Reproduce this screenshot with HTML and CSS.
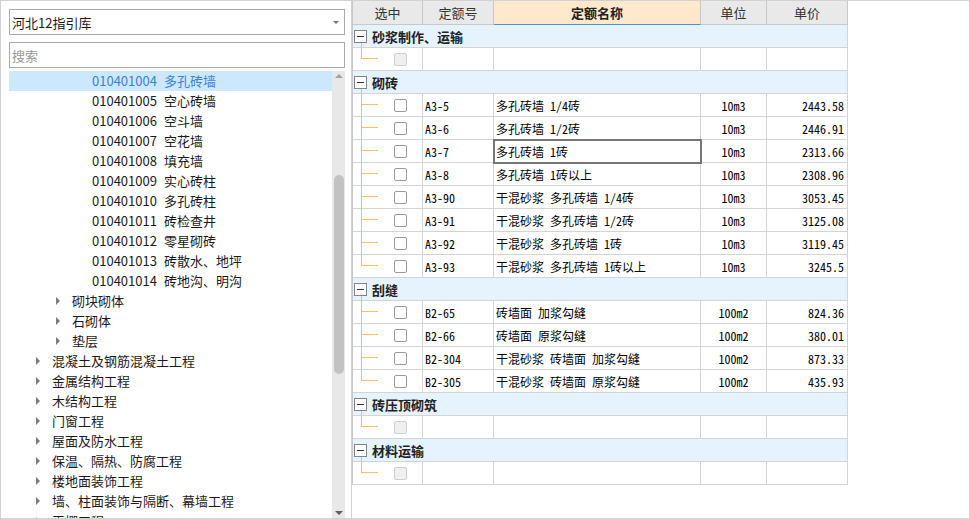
FILE: index.html
```html
<!DOCTYPE html>
<html lang="zh">
<head>
<meta charset="utf-8">
<title>定额</title>
<link rel="stylesheet" href="styles.css">
</head>
<body>
<div class="frame">
  <aside class="side">
    <div class="select"><span>河北12指引库</span><span class="drop"></span></div>
    <div class="search"><span class="ph">搜索</span></div>
    <div class="tree">
      <div class="list">
        <div class="node l4 sel"><span class="caret none"></span><span class="code">010401004</span><span>多孔砖墙</span></div>
        <div class="node l4"><span class="caret none"></span><span class="code">010401005</span><span>空心砖墙</span></div>
        <div class="node l4"><span class="caret none"></span><span class="code">010401006</span><span>空斗墙</span></div>
        <div class="node l4"><span class="caret none"></span><span class="code">010401007</span><span>空花墙</span></div>
        <div class="node l4"><span class="caret none"></span><span class="code">010401008</span><span>填充墙</span></div>
        <div class="node l4"><span class="caret none"></span><span class="code">010401009</span><span>实心砖柱</span></div>
        <div class="node l4"><span class="caret none"></span><span class="code">010401010</span><span>多孔砖柱</span></div>
        <div class="node l4"><span class="caret none"></span><span class="code">010401011</span><span>砖检查井</span></div>
        <div class="node l4"><span class="caret none"></span><span class="code">010401012</span><span>零星砌砖</span></div>
        <div class="node l4"><span class="caret none"></span><span class="code">010401013</span><span>砖散水、地坪</span></div>
        <div class="node l4"><span class="caret none"></span><span class="code">010401014</span><span>砖地沟、明沟</span></div>
        <div class="node l3"><span class="caret"></span><span>砌块砌体</span></div>
        <div class="node l3"><span class="caret"></span><span>石砌体</span></div>
        <div class="node l3"><span class="caret"></span><span>垫层</span></div>
        <div class="node l2"><span class="caret"></span><span>混凝土及钢筋混凝土工程</span></div>
        <div class="node l2"><span class="caret"></span><span>金属结构工程</span></div>
        <div class="node l2"><span class="caret"></span><span>木结构工程</span></div>
        <div class="node l2"><span class="caret"></span><span>门窗工程</span></div>
        <div class="node l2"><span class="caret"></span><span>屋面及防水工程</span></div>
        <div class="node l2"><span class="caret"></span><span>保温、隔热、防腐工程</span></div>
        <div class="node l2"><span class="caret"></span><span>楼地面装饰工程</span></div>
        <div class="node l2"><span class="caret"></span><span>墙、柱面装饰与隔断、幕墙工程</span></div>
        <div class="node l2"><span class="caret"></span><span>天棚工程</span></div>
      </div>
      <div class="sb">
        <span class="up"></span>
        <span class="thumb"></span>
        <span class="down"></span>
      </div>
    </div>
  </aside>
  <main class="main">
    <div class="grid">
      <div class="c h">选中</div>
      <div class="c h">定额号</div>
      <div class="c h hot">定额名称</div>
      <div class="c h">单位</div>
      <div class="c h">单价</div>

      <div class="c g"><span class="gbox"><span class="box"><span class="minus"></span></span><span class="stem"></span></span><span class="gl">砂浆制作、运输</span></div>
      <div class="c tc"><span class="br last"></span><span class="chk off"></span></div><div class="c"></div><div class="c"></div><div class="c"></div><div class="c"></div>

      <div class="c g"><span class="gbox"><span class="box"><span class="minus"></span></span><span class="stem"></span></span><span class="gl">砌砖</span></div>
      <div class="c tc"><span class="br"></span><span class="chk"></span></div><div class="c code2">A3-5</div><div class="c nm">多孔砖墙 1/4砖</div><div class="c un">10m3</div><div class="c pr">2443.58</div>
      <div class="c tc"><span class="br"></span><span class="chk"></span></div><div class="c code2">A3-6</div><div class="c nm">多孔砖墙 1/2砖</div><div class="c un">10m3</div><div class="c pr">2446.91</div>
      <div class="c tc"><span class="br"></span><span class="chk"></span></div><div class="c code2">A3-7</div><div class="c nm cur">多孔砖墙 1砖</div><div class="c un">10m3</div><div class="c pr">2313.66</div>
      <div class="c tc"><span class="br"></span><span class="chk"></span></div><div class="c code2">A3-8</div><div class="c nm">多孔砖墙 1砖以上</div><div class="c un">10m3</div><div class="c pr">2308.96</div>
      <div class="c tc"><span class="br"></span><span class="chk"></span></div><div class="c code2">A3-90</div><div class="c nm">干混砂浆 多孔砖墙 1/4砖</div><div class="c un">10m3</div><div class="c pr">3053.45</div>
      <div class="c tc"><span class="br"></span><span class="chk"></span></div><div class="c code2">A3-91</div><div class="c nm">干混砂浆 多孔砖墙 1/2砖</div><div class="c un">10m3</div><div class="c pr">3125.08</div>
      <div class="c tc"><span class="br"></span><span class="chk"></span></div><div class="c code2">A3-92</div><div class="c nm">干混砂浆 多孔砖墙 1砖</div><div class="c un">10m3</div><div class="c pr">3119.45</div>
      <div class="c tc"><span class="br last"></span><span class="chk"></span></div><div class="c code2">A3-93</div><div class="c nm">干混砂浆 多孔砖墙 1砖以上</div><div class="c un">10m3</div><div class="c pr">3245.5</div>

      <div class="c g"><span class="gbox"><span class="box"><span class="minus"></span></span><span class="stem"></span></span><span class="gl">刮缝</span></div>
      <div class="c tc"><span class="br"></span><span class="chk"></span></div><div class="c code2">B2-65</div><div class="c nm">砖墙面 加浆勾缝</div><div class="c un">100m2</div><div class="c pr">824.36</div>
      <div class="c tc"><span class="br"></span><span class="chk"></span></div><div class="c code2">B2-66</div><div class="c nm">砖墙面 原浆勾缝</div><div class="c un">100m2</div><div class="c pr">380.01</div>
      <div class="c tc"><span class="br"></span><span class="chk"></span></div><div class="c code2">B2-304</div><div class="c nm">干混砂浆 砖墙面 加浆勾缝</div><div class="c un">100m2</div><div class="c pr">873.33</div>
      <div class="c tc"><span class="br last"></span><span class="chk"></span></div><div class="c code2">B2-305</div><div class="c nm">干混砂浆 砖墙面 原浆勾缝</div><div class="c un">100m2</div><div class="c pr">435.93</div>

      <div class="c g"><span class="gbox"><span class="box"><span class="minus"></span></span><span class="stem"></span></span><span class="gl">砖压顶砌筑</span></div>
      <div class="c tc"><span class="br last"></span><span class="chk off"></span></div><div class="c"></div><div class="c"></div><div class="c"></div><div class="c"></div>

      <div class="c g"><span class="gbox"><span class="box"><span class="minus"></span></span><span class="stem"></span></span><span class="gl">材料运输</span></div>
      <div class="c tc"><span class="br last"></span><span class="chk off"></span></div><div class="c"></div><div class="c"></div><div class="c"></div><div class="c"></div>
    </div>
  </main>
</div>
</body>
</html>
```
FILE: styles.css
```css
* { box-sizing: border-box; }
html, body { margin: 0; padding: 0; background: #fff; }
body {
  font-family: "Noto Sans CJK SC", "Microsoft YaHei", sans-serif;
  font-size: 13px;
  color: #1e1e1e;
}
.frame {
  width: 970px;
  height: 519px;
  border: 1px solid #d2d2d2;
  display: flex;
  overflow: hidden;
}

/* ---------- left side ---------- */
.side {
  width: 351px;
  flex: none;
  border-right: 1px solid #d2d2d2;
  padding: 8px 6px 0 8px;
  display: flex;
  flex-direction: column;
}
.select, .search {
  height: 26px;
  flex: none;
  border: 1px solid #ababab;
  display: flex;
  align-items: center;
  padding: 0 5px 0 2px;
  line-height: 1;
}
.select { justify-content: space-between; color: #1a1a1a; }
.drop {
  width: 0; height: 0;
  border-left: 3px solid transparent;
  border-right: 3px solid transparent;
  border-top: 3px solid #777;
}
.search { margin-top: 7px; }
.ph { color: #9a9a9a; }
.tree {
  margin-top: 3px;
  flex: 1;
  min-height: 0;
  display: flex;
}
.list {
  flex: 1;
  overflow: hidden;
}
.node {
  height: 20px;
  line-height: 20px;
  display: flex;
  align-items: center;
  white-space: nowrap;
  color: #1a1a1a;
}
.node.l2 { padding-left: 27px; }
.node.l3 { padding-left: 47px; }
.node.l4 { padding-left: 67px; }
.node.sel { background: #cce8ff; color: #3c7fd6; }
.caret {
  flex: none;
  width: 0; height: 0;
  border-left: 4px solid #7c7c7c;
  border-top: 4px solid transparent;
  border-bottom: 4px solid transparent;
  margin-right: 12px;
}
.caret.none { visibility: hidden; }
.code { margin-right: 7px; }

.sb {
  width: 13px;
  flex: none;
  background: #e8e8e8;
  display: flex;
  flex-direction: column;
  align-items: center;
}
.up {
  margin-top: 3px;
  width: 0; height: 0;
  border-left: 4px solid transparent;
  border-right: 4px solid transparent;
  border-bottom: 4px solid #a3a3a3;
}
.thumb {
  margin-top: 97px;
  width: 10px;
  height: 199px;
  border-radius: 5px;
  background: #c2c2c2;
}
.down {
  margin-top: auto;
  margin-bottom: 3px;
  width: 0; height: 0;
  border-left: 4px solid transparent;
  border-right: 4px solid transparent;
  border-top: 4px solid #5e5e5e;
}

/* ---------- right grid ---------- */
.main { flex: 1; min-width: 0; }
.grid {
  display: grid;
  grid-template-columns: 70px 71px 207px 66px 81px;
  grid-template-rows: 24px;
  grid-auto-rows: 23px;
  border-left: 1px solid #c8c8c8;
  width: 496px;
  font-family: "Noto Sans Mono CJK SC", "Noto Sans CJK SC", monospace;
  font-size: 12px;
  color: #000;
}
.c {
  border-right: 1px solid #d4d4d4;
  border-bottom: 1px solid #d4d4d4;
  display: flex;
  align-items: center;
  white-space: nowrap;
  overflow: hidden;
  background: #fff;
}
.h {
  background: #e9e9e9;
  border-color: #c8c8c8;
  justify-content: center;
  font-family: "Noto Sans CJK SC", sans-serif;
  font-size: 13px;
  color: #333;
}
.h.hot {
  background: #ffe8cc;
  border-bottom-color: #4d94e0;
  font-weight: bold;
  color: #222;
}
.g {
  grid-column: 1 / -1;
  background: #e5f3fe;
  padding-left: 1px;
  align-items: stretch;
  overflow: visible;
}
.gbox {
  flex: none;
  width: 13px;
  display: flex;
  flex-direction: column;
  align-items: center;
  padding-top: 5px;
  margin-bottom: -1px;
}
.box {
  width: 13px;
  height: 13px;
  border: 1px solid #848484;
  background: #fff;
  display: flex;
  align-items: center;
  justify-content: center;
  flex: none;
}
.minus { width: 7px; height: 1px; background: #333; }
.stem {
  flex: 1;
  width: 1px;
  margin-left: 1px;
  background: #fbbf5a;
}
.gl {
  align-self: center;
  margin-left: 5px;
  font-family: "Noto Sans CJK SC", sans-serif;
  font-size: 13px;
  font-weight: bold;
  color: #222;
}
.tc {
  overflow: visible;
  align-items: stretch;
  padding-left: 8px;
}
.br {
  flex: none;
  width: 17px;
  margin-bottom: -1px;
  border-left: 1px solid #fbbf5a;
  background: linear-gradient(#fbbf5a, #fbbf5a) no-repeat 0 10px / 16px 1px;
}
.br.last {
  align-self: flex-start;
  height: 11px;
  margin-bottom: 0;
}
.chk {
  align-self: center;
  margin-left: 16px;
  width: 13px;
  height: 13px;
  border: 1px solid #9a9a9a;
  border-radius: 2px;
  background: #fff;
}
.chk.off { background: #efefef; border-color: #cfcfcf; }
.code2, .nm { padding-left: 2px; }
.un { justify-content: center; }
.pr { justify-content: flex-end; padding-right: 3px; }
.cur { outline: 2px solid #767676; outline-offset: -1px; position: relative; z-index: 1; }
```
